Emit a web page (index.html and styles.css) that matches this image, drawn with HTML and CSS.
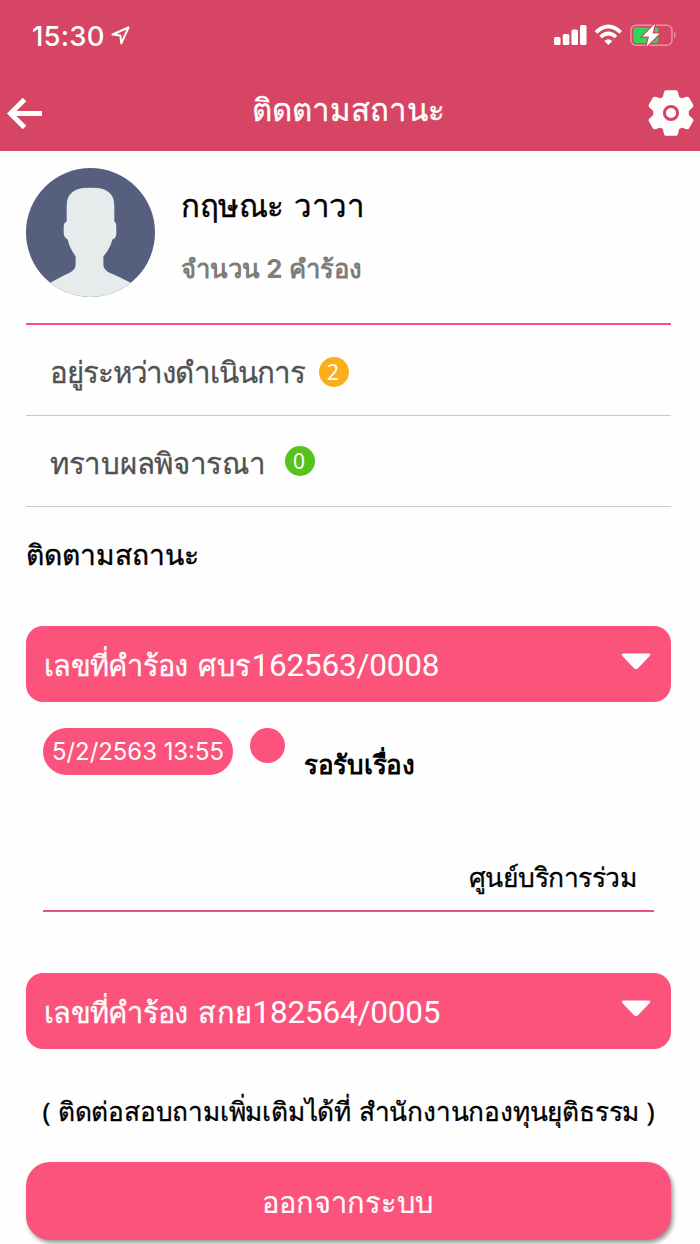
FILE: index.html
```html
<!DOCTYPE html>
<html lang="th">
<head>
<meta charset="utf-8">
<title>ติดตามสถานะ</title>
<link rel="stylesheet" href="styles.css">
</head>
<body>
<header class="top">
  <div class="statusbar">
    <span class="clock">15:30</span>
    <svg class="loc" width="20" height="20" viewBox="0 0 20 20"><path d="M17.500 1.500 1.500 8.500l7.800 1 1 7.800z" fill="none" stroke="#fff" stroke-width="2" stroke-linejoin="round"/></svg>
    <svg class="signals" width="124" height="26" viewBox="0 0 124 26">
      <g fill="#fff"><rect x="0" y="14" width="6.500" height="8" rx="1.500"/><rect x="8.800" y="11" width="6.500" height="11" rx="1.500"/><rect x="17.500" y="6.500" width="6.500" height="15.500" rx="1.500"/><rect x="26" y="2" width="6.500" height="20" rx="1.500"/></g>
      <g fill="none" stroke="#fff" stroke-width="3.700"><path d="M42 9.300Q54.300-2.200 66.700 9.300"/><path d="M46.600 14Q54.300 6.900 62 14"/></g>
      <path d="M50.300 18Q54.300 14.500 58.300 18L54.300 22z" fill="#fff"/>
      <rect x="77" y="2.200" width="41" height="20" rx="5" fill="none" stroke="#f08fa5" stroke-width="1.500"/>
      <path d="M120 8.500q3.500 3.500 0 7z" fill="#f08fa5"/>
      <rect x="79.300" y="4.600" width="25" height="15.400" rx="3" fill="#35d45b"/>
      <path d="M101 .8 88.500 13.500h6.500L92.500 23.500l13-13h-7z" fill="#fff" stroke="#d64563" stroke-width="2.500" paint-order="stroke"/>
    </svg>
  </div>
  <div class="navbar">
    <svg class="back" width="37" height="34" viewBox="0 0 37 34"><path d="M18.500 2.500 4.500 16.500 18.500 30.500M4.500 16.500H36" fill="none" stroke="#fff" stroke-width="5"/></svg>
    <h1 class="title">ติดตามสถานะ</h1>
    <svg class="gear" width="46" height="48" viewBox="0 0 46 48"><path d="M18 2h10q1 0 1.200 1l1.300 5.500 3 1.700 5.500-1.700q1-.3 1.500.6l4 7q.5.900-.2 1.600l-4.300 4v4.600l4.300 4q.7.700.2 1.600l-4 7q-.5.900-1.500.6l-5.500-1.700-3 1.700L29.200 45q-.2 1-1.200 1H18q-1 0-1.200-1l-1.300-5.500-3-1.700L7 39.500q-1 .3-1.500-.6l-4-7q-.5-.9.200-1.600l4.300-4v-4.600l-4.300-4q-.7-.7-.2-1.600l4-7Q6 8.200 7 8.500l5.500 1.700 3-1.700L16.800 3Q17 2 18 2z" fill="#fff" stroke="#fff" stroke-width="1.500" stroke-linejoin="round"/><circle cx="23" cy="24" r="6.600" fill="#fff" stroke="#d64563" stroke-width="3"/></svg>
  </div>
</header>
<main class="page">
  <section class="profile">
    <svg class="avatar" width="129" height="129" viewBox="0 0 130 130"><defs><clipPath id="disc"><circle cx="65" cy="65" r="65"/></clipPath></defs><g clip-path="url(#disc)"><path d="M0 0h130v130H0z" fill="#565f7e"/><path d="M41 54V38q0-18 22-18h4q22 0 22 18v16q2 1 2 5v7q0 5-4 6-2 9-9 17v8q0 5 5 8 10 4 23 11 12 8 24 14v12H0v-12q12-6 24-14 12-7 21-11 5-3 5-8v-8q-6-8-8-17-4-2-4-7v-6q0-4 3-5z" fill="#e6ecec"/></g></svg>
    <div class="who">
      <div class="name">กฤษณะ วาวา</div>
      <div class="count">จำนวน <span class="num">2</span> คำร้อง</div>
    </div>
  </section>
  <div class="row"><span class="rowlabel progress">อยู่ระหว่างดำเนินการ</span><span class="badge amber">2</span></div>
  <div class="row"><span class="rowlabel result">ทราบผลพิจารณา</span><span class="badge green">0</span></div>
  <h2 class="heading">ติดตามสถานะ</h2>
  <div class="card"><span class="cardlabel"><span class="word">เลขที่คำร้อง</span> ศบร<span class="digits">162563/0008</span></span><svg class="caret" width="30" height="17" viewBox="0 0 30 17"><path d="M2 1.800h26L16.500 14q-1.500 1.800-3 0z" fill="#fff" stroke="#fff" stroke-width="2.500" stroke-linejoin="round"/></svg></div>
  <section class="detail">
    <div class="event"><span class="date">5/2/2563 13:55</span><span class="dot"></span><span class="state">รอรับเรื่อง</span></div>
    <div class="center">ศูนย์บริการร่วม</div>
  </section>
  <div class="card"><span class="cardlabel"><span class="word">เลขที่คำร้อง</span> สกย<span class="digits">182564/0005</span></span><svg class="caret" width="30" height="17" viewBox="0 0 30 17"><path d="M2 1.800h26L16.500 14q-1.500 1.800-3 0z" fill="#fff" stroke="#fff" stroke-width="2.500" stroke-linejoin="round"/></svg></div>
  <p class="contact">( ติดต่อสอบถามเพิ่มเติมได้ที่ สำนักงานกองทุนยุติธรรม )</p>
  <button class="logout">ออกจากระบบ</button>
</main>
</body>
</html>
```
FILE: styles.css
```css
* { box-sizing: border-box; }
body { margin: 0; height: 1244px; overflow: hidden; background: #fefefe; color: #000; font-family: "Noto Sans", sans-serif; line-height: 40px; white-space: nowrap; }
svg { display: block; flex: none; }
.top { height: 151px; background: #d64563; color: #fff; }
.statusbar { display: flex; height: 72px; padding: 23px 22px 0 32px; align-items: flex-start; }
.clock { width: 79px; font: 500 27.5px/26px Inter, sans-serif; letter-spacing: .2px; }
.loc { margin-top: 3px; }
.signals { margin-left: auto; }
.navbar { display: grid; grid-template-columns: 60px 1fr 60px; height: 79px; padding: 0 6px; align-items: start; }
.back { margin-top: 25px; }
.title { margin: 17px 4px 0 0; font-size: 31.2px; font-weight: 400; text-align: center; line-height: 40px; -webkit-text-stroke: .3px; }
.gear { justify-self: end; margin-top: 17px; }
.page { padding: 0 29px 0 26px; }
.profile { display: flex; height: 174px; padding-top: 17px; gap: 26px; border-bottom: 2px solid #f9517a; }
.who { padding-top: 17px; }
.name { font-size: 31.2px; letter-spacing: -.5px; word-spacing: 3px; -webkit-text-stroke: .4px; }
.count { margin-top: 24px; color: #7d7d7d; font-size: 25.7px; font-weight: 700; letter-spacing: -.1px; }
.num { font-family: Inter, sans-serif; }
.row { display: flex; height: 91px; padding: 0 24px; align-items: center; border-bottom: 1px solid #c8c8c8; }
.rowlabel { padding-top: 4px; color: #515151; font-size: 29.5px; -webkit-text-stroke: .3px; }
.progress { width: 269px; letter-spacing: -1.1px; }
.result { width: 235px; padding-top: 3px; letter-spacing: -.3px; }
.badge { width: 30px; height: 30px; padding-right: 2px; border-radius: 50%; color: #fff; font: 21px/30px "Noto Sans", sans-serif; text-align: center; }
.amber { margin-top: 3px; background: #fbae1c; }
.green { background: #56c21c; }
.heading { height: 119px; margin: 0; padding-top: 27px; font-size: 28.2px; font-weight: 400; -webkit-text-stroke: .4px; }
.card { display: flex; height: 76px; padding: 0 20px 0 18px; justify-content: space-between; align-items: center; border-radius: 17px; background: #fc537c; color: #fff; }
.cardlabel { padding-top: 2px; font-size: 29px; letter-spacing: .4px; word-spacing: 3px; -webkit-text-stroke: .3px; }
.word { letter-spacing: -.7px; }
.digits { font: 31.5px/40px Roboto, sans-serif; letter-spacing: -.2px; -webkit-text-stroke: 0; }
.caret { margin-top: -6px; }
.detail { height: 184px; margin: 26px 17px 61px; border-bottom: 2px solid #e8557a; }
.event { display: flex; height: 129px; align-items: flex-start; }
.date { width: 190px; height: 47px; border-radius: 24px; background: #fc537c; color: #fff; font: 400 23.9px/47px Inter, sans-serif; text-align: center; }
.dot { width: 35px; height: 35px; margin: 0 19px 0 17px; border-radius: 50%; background: #fc537c; }
.state { padding-top: 16px; font-size: 26px; font-weight: 700; letter-spacing: -.3px; }
.center { padding-right: 18px; text-align: right; font-size: 26.5px; letter-spacing: -.5px; -webkit-text-stroke: .3px; }
.contact { height: 40px; margin: 42px 0 31px; text-align: center; font-size: 26.25px; letter-spacing: -.2px; word-spacing: 1px; -webkit-text-stroke: .3px; }
.logout { display: block; width: 100%; height: 78px; padding: 2px 3px 0 0; border: 0; border-radius: 24px; background: #fc537c; box-shadow: 2px 3px 4px rgba(0, 0, 0, .4); color: #fff; font: 29px/40px "Noto Sans", sans-serif; -webkit-text-stroke: .2px; }
```
